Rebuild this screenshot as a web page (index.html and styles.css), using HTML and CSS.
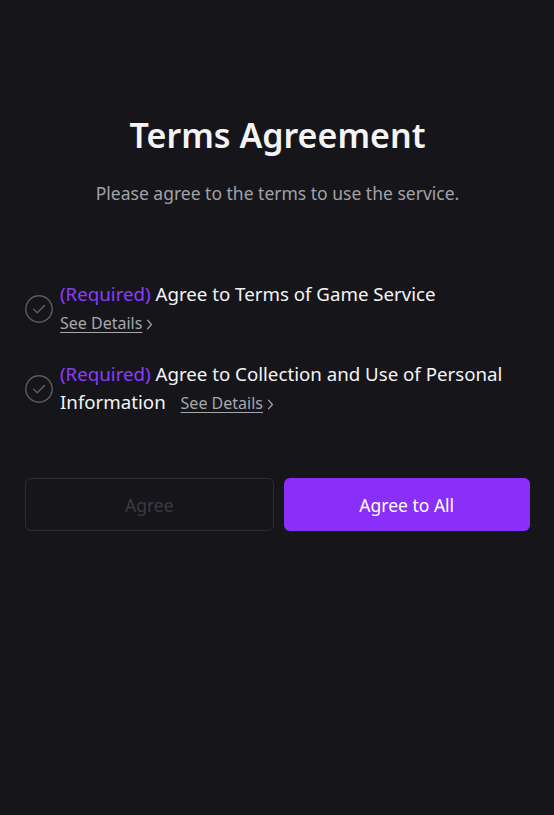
FILE: index.html
```html
<!DOCTYPE html>
<html lang="en">
<head>
<meta charset="utf-8">
<title>Terms Agreement</title>
<link rel="stylesheet" href="styles.css">
</head>
<body>
<main class="page">
  <header class="head">
    <h1 class="title">Terms Agreement</h1>
    <p class="subtitle">Please agree to the terms to use the service.</p>
  </header>
  <ul class="terms">
    <li class="term">
      <svg class="check" width="28" height="28" viewBox="0 0 28 28" aria-hidden="true">
        <circle cx="14" cy="14" r="13.2" fill="none" stroke="#5b5b61" stroke-width="1.4"/>
        <path d="M8.6 14.2 L12.3 17.8 L19.4 10.6" fill="none" stroke="#5b5b61" stroke-width="1.5" stroke-linecap="round" stroke-linejoin="round"/>
      </svg>
      <div class="term-text">
        <span class="req">(Required)</span> Agree to Terms of Game Service<br><a class="details" href="#">See Details</a><svg class="chev" width="7" height="11" viewBox="0 0 7 11" aria-hidden="true"><path d="M1.5 1.2 L5.4 5.5 L1.5 9.8" fill="none" stroke="#a7a7ac" stroke-width="1.2" stroke-linecap="round" stroke-linejoin="round"/></svg>
      </div>
    </li>
    <li class="term">
      <svg class="check" width="28" height="28" viewBox="0 0 28 28" aria-hidden="true">
        <circle cx="14" cy="14" r="13.2" fill="none" stroke="#5b5b61" stroke-width="1.4"/>
        <path d="M8.6 14.2 L12.3 17.8 L19.4 10.6" fill="none" stroke="#5b5b61" stroke-width="1.5" stroke-linecap="round" stroke-linejoin="round"/>
      </svg>
      <div class="term-text">
        <span class="req">(Required)</span> Agree to Collection and Use of Personal Information <a class="details gap" href="#">See Details</a><svg class="chev" width="7" height="11" viewBox="0 0 7 11" aria-hidden="true"><path d="M1.5 1.2 L5.4 5.5 L1.5 9.8" fill="none" stroke="#a7a7ac" stroke-width="1.2" stroke-linecap="round" stroke-linejoin="round"/></svg>
      </div>
    </li>
  </ul>
  <div class="actions">
    <button class="btn btn-agree" disabled>Agree</button>
    <button class="btn btn-all">Agree to All</button>
  </div>
</main>
</body>
</html>
```
FILE: styles.css
```css
* { box-sizing: border-box; }
html, body {
  margin: 0;
  padding: 0;
  background: #16161a;
  height: 100%;
}
body {
  font-family: "Noto Sans", "Open Sans", sans-serif;
  color: #ffffff;
}
.page {
  padding: 113px 24px 0 25px;
}
.head {
  text-align: center;
}
.title {
  margin: 0;
  font-size: 34px;
  font-weight: 600;
  line-height: 44px;
  color: #f4f4f6;
}
.subtitle {
  margin: 24px 0 0;
  font-size: 17.5px;
  line-height: 24px;
  color: #a1a1a6;
}
.terms {
  list-style: none;
  margin: 75px 0 0;
  padding: 0;
  display: flex;
  flex-direction: column;
  gap: 23px;
}
.term {
  display: flex;
  align-items: center;
  gap: 7px;
}
.check {
  flex: 0 0 auto;
}
.term-text {
  font-size: 18.7px;
  line-height: 28px;
  color: #f4f4f6;
}
.req {
  color: #8b3cff;
}
.details {
  font-size: 16px;
  color: #a7a7ac;
  text-decoration: underline;
  text-underline-offset: 3px;
}
.details.gap {
  margin-left: 10px;
}
.chev {
  margin-left: 4px;
  vertical-align: -1px;
}
.actions {
  margin-top: 61px;
  display: flex;
  gap: 10px;
}
.btn {
  flex: 1 1 0;
  height: 53px;
  border-radius: 6px;
  font-family: inherit;
  font-size: 17.5px;
}
.btn-agree {
  background: transparent;
  border: 1px solid #2c2c31;
  color: #3b3b41;
}
.btn-all {
  background: #8a2ff9;
  border: none;
  color: #ffffff;
}
```
